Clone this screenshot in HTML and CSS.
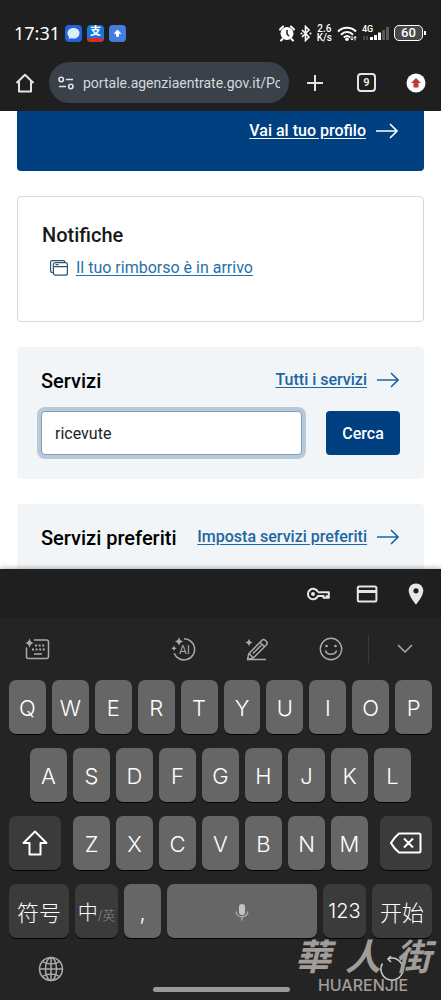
FILE: index.html
```
<!DOCTYPE html>
<html lang="it">
<head>
  <meta charset="UTF-8">
  <meta name="viewport" content="width=device-width, initial-scale=1">
  <title>Area riservata</title>
  <link rel="stylesheet" href="styles.css">
</head>
<body>

  <header class="top">
    <div class="status-bar">
      <span class="clock">17:31</span>
      <svg class="app-icon" viewBox="0 0 17 17"><rect width="17" height="17" rx="4" fill="#2463d8"/><path d="M8.500 3c3.600 0 6 2.200 6 5.200s-2.400 5.300-6 5.300c-.8 0-1.500-.1-2.100-.3L3.500 14l.6-2.200C3 10.900 2.500 9.700 2.500 8.200 2.500 5.200 4.900 3 8.500 3z" fill="#dcecff"/></svg>
      <span class="app-icon pay"><b>支</b><i></i></span>
      <svg class="app-icon" viewBox="0 0 17 17"><rect width="17" height="17" rx="4" fill="#437de0"/><path d="M8.500 4.500l4 4.200h-2.500v3h-3v-3H4.500z" fill="#fff"/></svg>

      <div class="status-right">
        <svg width="16" height="17" viewBox="0 0 16 17"><circle cx="8" cy="8.500" r="6.500" fill="#fff"/><path d="M1 4.500L4 1.500M15 4.500l-3-3M3.500 14L2 15.500M12.500 14l1.500 1.500" stroke="#fff" stroke-width="2" stroke-linecap="round"/><path d="M8 5v4l2 2" fill="none" stroke="#1f1f1f" stroke-width="1.500"/></svg>
        <svg width="12" height="17" viewBox="0 0 12 17"><path d="M2 5l7 7-3.500 3.500v-14L9 5l-7 7" fill="none" stroke="#fff" stroke-width="1.600"/><circle cx="1.500" cy="8.500" r="1" fill="#fff"/><circle cx="10.500" cy="8.500" r="1" fill="#fff"/></svg>
        <span class="speed">2.6<br>K/s</span>
        <svg width="20" height="17" viewBox="0 0 20 17"><g fill="none" stroke="#fff" stroke-width="2"><path d="M1 6.500c5-5 13-5 18 0"/><path d="M4 9.700c3.500-3.500 8.500-3.500 12 0"/><path d="M6.800 12.500c2-1.800 4.400-1.800 6.400 0"/></g><circle cx="10" cy="14.200" r="1.800" fill="#fff"/><path d="M15 11v4M13.600 13.500L15 15l1.400-1.500M18 15.500v-4M16.800 13L18 11.500l1.400 1.500" fill="none" stroke="#fff"/></svg>
        <span class="signal">
          <span>4G</span>
          <svg width="27" height="17" viewBox="0 0 27 17"><path d="M2 11v4M5 11v4" stroke="#777"/><path d="M9.500 12v3M13.500 10v5M17.500 7.500V15" stroke="#fff" stroke-width="3"/><path d="M21.500 5v10M25.500 2v13" stroke="#5a5a5a" stroke-width="3"/></svg>
        </span>
        <span class="battery">60</span>
      </div>
    </div>

    <div class="browser-bar">
      <button class="icon-btn home" aria-label="Home">
        <svg width="20" height="20" viewBox="0 0 20 20"><path d="M1.500 10L10 1.800 18.500 10M4 8v10.500h12V8" fill="none" stroke="#e3e3e3" stroke-width="2" stroke-linejoin="round"/></svg>
      </button>
      <label class="address">
        <svg width="16" height="14" viewBox="0 0 16 14"><g fill="none" stroke="#e3e3e3" stroke-width="1.600"><circle cx="3.200" cy="3.500" r="2.200"/><path d="M8 3.500h7M1 10.500h7"/><circle cx="12.800" cy="10.500" r="2.200"/></g></svg>
        <input type="text" value="portale.agenziaentrate.gov.it/PortaleWeb" aria-label="Indirizzo">
      </label>
      <button class="icon-btn" aria-label="Nuova scheda">
        <svg width="18" height="18" viewBox="0 0 18 18"><path d="M9 1v16M1 9h16" stroke="#e3e3e3" stroke-width="2"/></svg>
      </button>
      <button class="tabs" aria-label="Schede aperte">9</button>
      <button class="icon-btn" aria-label="Aggiorna">
        <svg width="20" height="20" viewBox="0 0 20 20"><circle cx="10" cy="10" r="9.500" fill="#fff"/><path d="M10 5l5 5h-2.500v4.500h-5V10H5z" fill="#b93b31"/></svg>
      </button>
    </div>
  </header>

  <main class="page">
    <section class="card profile">
      <a class="link-arrow" href="#profilo"><span>Vai al tuo profilo</span>
        <svg width="22" height="16" viewBox="0 0 22 16"><path d="M0 8h21M14 1l7 7-7 7" fill="none" stroke="currentColor" stroke-width="1.600"/></svg></a>
    </section>

    <section class="card notices">
      <h2>Notifiche</h2>
      <a class="notice" href="#rimborso">
        <svg width="18" height="16" viewBox="0 0 18 16"><g fill="none" stroke="#285577" stroke-width="1.200"><path d="M3.500 12.500H2.300c-1 0-1.700-.7-1.700-1.700V2.300C.6 1.300 1.300.6 2.300.6h11c1 0 1.700.7 1.700 1.700"/><rect x="3.400" y="2.600" width="14" height="12.600" rx="2"/><path d="M3.400 6.600h14M5.500 4.600h3"/></g></svg>
        <span>Il tuo rimborso è in arrivo</span>
      </a>
    </section>

    <section class="card services">
      <div class="card-head">
        <h2>Servizi</h2>
        <a class="link-arrow" href="#servizi"><span>Tutti i servizi</span>
          <svg width="22" height="16" viewBox="0 0 22 16"><path d="M0 8h21M14 1l7 7-7 7" fill="none" stroke="currentColor" stroke-width="1.600"/></svg></a>
      </div>
      <form class="search">
        <input type="text" value="ricevute" aria-label="Cerca un servizio">
        <button type="button">Cerca</button>
      </form>
    </section>

    <section class="card favourites">
      <div class="card-head">
        <h2>Servizi preferiti</h2>
        <a class="link-arrow" href="#preferiti"><span>Imposta servizi preferiti</span>
          <svg width="22" height="16" viewBox="0 0 22 16"><path d="M0 8h21M14 1l7 7-7 7" fill="none" stroke="currentColor" stroke-width="1.600"/></svg></a>
      </div>
    </section>
  </main>

  <footer class="keyboard">
    <div class="autofill">
      <button class="icon-btn" aria-label="Password">
        <svg width="24" height="24" viewBox="0 0 24 24"><path d="M12 10.200h10.800v5.600h-2v-2.600M17.500 15.800v-2.600M22.800 15.800h-5.300v-1.900H12a5.200 5.200 0 1 1 0-3.700" fill="none" stroke="#e6e6e6" stroke-width="2" stroke-linejoin="round"/><circle cx="7" cy="12" r="2" fill="#e6e6e6"/></svg>
      </button>
      <button class="icon-btn" aria-label="Carte">
        <svg width="24" height="24" viewBox="0 0 24 24"><rect x="2.800" y="4.500" width="18.600" height="15" rx="1.500" fill="none" stroke="#e6e6e6" stroke-width="2"/><path d="M2.800 9.500h18.600" stroke="#e6e6e6" stroke-width="3"/></svg>
      </button>
      <button class="icon-btn" aria-label="Indirizzi">
        <svg width="24" height="24" viewBox="0 0 24 24"><path d="M12 1.500c-4.300 0-7.300 3.200-7.300 7.200C4.700 14 12 22.500 12 22.500S19.300 14 19.300 8.700c0-4-3-7.200-7.300-7.200zm0 4.700a2.600 2.600 0 1 1 0 5.200 2.600 2.600 0 0 1 0-5.200z" fill="#e6e6e6" fill-rule="evenodd"/></svg>
      </button>
    </div>

    <div class="tools">
      <button class="icon-btn" aria-label="Tastiera">
        <svg width="26" height="24" viewBox="0 0 26 24"><path d="M10 3h12.500q2 0 2 2v14.500q0 2-2 2h-18q-2 0-2-2V10.500" fill="none" stroke="#aaa" stroke-width="1.500"/><path d="M5.500 1.200Q6.200 5.300 10 6 6.200 6.700 5.500 10.800 4.800 6.700 1 6 4.800 5.300 5.500 1.200z" fill="#aaa"/><path d="M11 8.500h10M8 12.500h13" stroke="#aaa" stroke-width="2" stroke-dasharray="2 1.600"/><path d="M10 17h8" stroke="#aaa" stroke-width="1.500"/></svg>
      </button>
      <span></span>
      <button class="icon-btn" aria-label="Assistente AI">
        <svg width="26" height="26" viewBox="0 0 26 26"><path d="M13 2.700a10.600 10.600 0 1 1-9.800 14.500" fill="none" stroke="#aaa" stroke-width="1.500"/><path d="M8 1q.6 3.900 4.500 4.500Q8.600 6.100 8 10 7.400 6.100 3.500 5.500 7.400 4.900 8 1zM3 9.500q.4 2.400 2.700 2.800Q3.400 12.700 3 15.100 2.600 12.700.3 12.300 2.600 11.900 3 9.500z" fill="#aaa"/><text class="ai" x="8" y="18">AI</text></svg>
      </button>
      <button class="icon-btn" aria-label="Scrittura">
        <svg width="26" height="26" viewBox="0 0 26 26"><g fill="none" stroke="#aaa" stroke-width="1.500" stroke-linejoin="round"><path d="M3.500 23.500l1.300-5.800L18 4.200q1.500-1.500 3.200 0l1.300 1.300q1.500 1.600 0 3.200L9.200 22zM16 6.300l4.500 4.500M5 17.500l4.300 4.300M9 17.500L17.500 9"/><path d="M3.500 23.500H22"/></g><path d="M5 2.500q.6 3.400 3.800 4Q5.600 7.100 5 10.500 4.400 7.100 1.200 6.500 4.400 5.900 5 2.500z" fill="#aaa"/></svg>
      </button>
      <button class="icon-btn" aria-label="Emoji">
        <svg width="24" height="24" viewBox="0 0 24 24"><circle cx="12" cy="12" r="10.700" fill="none" stroke="#aaa" stroke-width="1.400"/><circle cx="7.500" cy="9" r="1.300" fill="#aaa"/><circle cx="16.500" cy="9" r="1.300" fill="#aaa"/><path d="M6.500 13.500c1.300 5 9.700 5 11 0" fill="none" stroke="#aaa" stroke-width="1.500"/></svg>
      </button>
      <button class="icon-btn collapse" aria-label="Chiudi tastiera">
        <svg width="16" height="10" viewBox="0 0 16 10"><path d="M1 1l7 7 7-7" fill="none" stroke="#aaa" stroke-width="1.500"/></svg>
      </button>
    </div>

    <div class="keys">
      <div class="row">
        <button>Q</button><button>W</button><button>E</button><button>R</button><button>T</button><button>Y</button><button>U</button><button>I</button><button>O</button><button>P</button>
      </div>
      <div class="row row-home">
        <button>A</button><button>S</button><button>D</button><button>F</button><button>G</button><button>H</button><button>J</button><button>K</button><button>L</button>
      </div>
      <div class="row row-shift">
        <button class="dark shift" aria-label="Maiuscole">
          <svg width="26" height="26" viewBox="0 0 26 26"><path d="M13 1.500L24.500 13H18.500v11.500h-11V13H1.500z" fill="none" stroke="#fff" stroke-width="2" stroke-linejoin="round"/></svg>
        </button>
        <div class="row letters">
          <button>Z</button><button>X</button><button>C</button><button>V</button><button>B</button><button>N</button><button>M</button>
        </div>
        <button class="dark shift" aria-label="Cancella">
          <svg width="32" height="22" viewBox="0 0 32 22"><path d="M9 1.500h20q1.500 0 1.500 1.500v16q0 1.500-1.500 1.500H9Q4 16.500 1 11 4 5.500 9 1.500zM14 6.500l9 9M23 6.500l-9 9" fill="none" stroke="#fff" stroke-width="2" stroke-linejoin="round"/></svg>
        </button>
      </div>
      <div class="row" lang="zh-CN">
        <button class="dark wide">符号</button>
        <button class="dark mid">中<small>/英</small></button>
        <button class="comma">,</button>
        <button class="space" aria-label="Spazio">
          <svg width="14" height="18" viewBox="0 0 14 18"><rect x="4" y="1" width="6" height="11" rx="3" fill="#c4c4c4"/><path d="M1.200 8.500c0 7 11.600 7 11.600 0M7 14v3.500" fill="none" stroke="#a8a8a8" stroke-width="1.500"/></svg>
        </button>
        <button class="dark mid">123</button>
        <button class="dark wide">开始</button>
      </div>
    </div>

    <div class="nav">
      <button class="icon-btn" aria-label="Lingua">
        <svg width="26" height="26" viewBox="0 0 26 26"><g fill="none" stroke="#aaa" stroke-width="1.500"><circle cx="13" cy="13" r="11.500"/><ellipse cx="13" cy="13" rx="5.500" ry="11.500"/><path d="M1.500 13h23M13 1.500v23M4.500 5.500c4.500 3.300 12.500 3.300 17 0M4.500 20.500c4.500-3.300 12.500-3.300 17 0"/></g></svg>
      </button>
      <span class="home-line"></span>
      <svg width="26" height="26" viewBox="0 0 26 26"><path d="M10 2.500a11 11 0 1 1-6.500 5" fill="none" stroke="#ccc" stroke-width="1.500"/><path d="M12 0L9 3l3 3" fill="none" stroke="#ccc" stroke-width="1.500"/></svg>
    </div>

    <div class="watermark" lang="zh-TW">
      <span class="mark"><b>華</b><b>人</b><b>街</b></span>
      <span class="mark-latin">HUARENJIE</span>
    </div>
  </footer>

</body>
</html>
```
FILE: styles.css
```
* {
  box-sizing: border-box;
}

body {
  margin: 0;
  height: 100vh;
  display: flex;
  flex-direction: column;
  overflow: hidden;
  background: #fff;
  color: #17191c;
  font-family: Roboto, "Noto Sans CJK SC", sans-serif;
  font-size: 16px;
}

svg {
  display: block;
  flex: none;
}

button {
  font-family: inherit;
  border: none;
  padding: 0;
  cursor: pointer;
}

.icon-btn {
  display: flex;
  align-items: center;
  justify-content: center;
  background: none;
}

/* status bar and address bar */
.top {
  background: #1f1f1f;
  color: #fff;
}

.status-bar {
  display: flex;
  align-items: center;
  gap: 5px;
  height: 58px;
  padding: 8px 14px 0;
}

.clock {
  font-family: "Noto Sans", sans-serif;
  font-size: 18px;
  line-height: 20px;
}

.app-icon {
  width: 17px;
  height: 17px;
}

.pay {
  display: flex;
  flex-direction: column;
  border-radius: 4px;
  overflow: hidden;
  background: #1677e0;
  text-align: center;
}

.pay b {
  font-size: 11px;
  line-height: 14px;
  height: 13px;
}

.pay i {
  height: 4px;
  background: #d2302f;
}

.status-right {
  display: flex;
  align-items: center;
  gap: 5px;
  margin-left: auto;
}

.speed {
  font-size: 10px;
  font-weight: 500;
  line-height: 9px;
  text-align: center;
}

.signal {
  position: relative;
}

.signal span {
  position: absolute;
  left: 0;
  top: 0;
  font-size: 9px;
  font-weight: 500;
  line-height: 8px;
}

.battery {
  position: relative;
  width: 29px;
  height: 16px;
  margin-right: 4px;
  border: 1px solid #fff;
  border-radius: 5px;
  background: #484848;
  font-size: 13px;
  font-weight: 500;
  line-height: 14px;
  text-align: center;
}

.battery::after {
  content: "";
  position: absolute;
  right: -4px;
  top: 5px;
  width: 2px;
  height: 4px;
  background: #fff;
}

.browser-bar {
  display: flex;
  align-items: center;
  padding: 4px 15px 8px;
}

.address {
  flex: 1;
  display: flex;
  align-items: center;
  gap: 9px;
  height: 41px;
  margin: 0 17px 0 14px;
  padding: 0 9px;
  border-radius: 21px;
  background: #3b414b;
}

.address input {
  flex: 1;
  min-width: 0;
  padding: 0;
  border: none;
  background: none;
  color: #d6d8dc;
  font-family: Roboto, sans-serif;
  font-size: 14px;
}

.tabs {
  width: 19px;
  height: 19px;
  margin: 0 30px 0 33px;
  padding: 0;
  border: 2px solid #e3e3e3;
  border-radius: 4px;
  background: none;
  color: #e3e3e3;
  font-size: 11px;
  font-weight: 700;
  line-height: 15px;
}

/* page */
.page {
  flex: 1;
  min-height: 0;
  overflow: hidden;
  padding: 0 17px;
  display: flex;
  flex-direction: column;
  gap: 25px;
}

.card {
  flex: none;
  border-radius: 4px;
  padding: 22px 24px 24px;
}

h2 {
  margin: 0;
  font-size: 20px;
  font-weight: 500;
  line-height: 24px;
}

.link-arrow {
  display: flex;
  align-items: center;
  gap: 10px;
  color: #1d66a3;
  font-weight: 500;
  line-height: 22px;
}

.link-arrow span,
.notice span {
  text-decoration: underline;
  text-underline-offset: 2px;
}

.link-arrow,
.notice {
  text-decoration: none;
}

.profile {
  display: flex;
  justify-content: flex-end;
  align-items: flex-start;
  height: 60px;
  padding: 9px 26px;
  border-radius: 0 0 4px 4px;
  background: #003f80;
}

.profile .link-arrow {
  color: #fff;
}

.notices {
  min-height: 126px;
  border: 1px solid #d3d8d9;
  padding: 26px 24px;
}

.notice {
  display: flex;
  align-items: center;
  gap: 8px;
  margin: 11px 8px 0;
  color: #2870a8;
  line-height: 20px;
}

.services,
.favourites {
  background: #f2f5f7;
}

.services .search {
  padding-top: 18px;
}

.favourites {
  height: 132px;
}

.card-head {
  display: flex;
  justify-content: space-between;
  align-items: flex-start;
  color: #000;
}

.card-head .link-arrow {
  margin-right: 1px;
}

.search {
  display: flex;
  gap: 24px;
}

.search input {
  flex: 1;
  min-width: 0;
  height: 44px;
  padding: 0 13px;
  border: 1px solid #7d9fbe;
  border-radius: 4px;
  outline: none;
  box-shadow: 0 0 0 4px #b8c9d8;
  color: #222;
  font-family: inherit;
  font-size: 16px;
}

.search button {
  width: 74px;
  height: 44px;
  border-radius: 4px;
  background: #003f80;
  color: #fff;
  font-size: 16px;
  font-weight: 500;
}

/* keyboard */
.keyboard {
  position: relative;
  flex: none;
  background: #242424;
  box-shadow: 0 -1px 5px rgba(0,0,0,0.3);
}

.autofill {
  display: flex;
  justify-content: flex-end;
  align-items: center;
  gap: 25px;
  height: 49px;
  padding-right: 13px;
  background: #1f1f1f;
}

.tools {
  display: grid;
  grid-template-columns: repeat(6, 1fr);
  align-items: center;
  height: 62px;
}

.ai {
  font-family: Roboto, sans-serif;
  font-size: 12px;
  fill: #aaa;
}

.collapse {
  height: 28px;
  border-left: 1px solid #3b3b3b;
}

.keys {
  display: flex;
  flex-direction: column;
  gap: 14px;
  padding: 0 9px;
}

.row {
  display: flex;
  gap: 6px;
}

.row-home {
  padding: 0 21px;
}

.row-shift {
  gap: 12px;
}

.letters {
  flex: 1;
}

.row button {
  flex: 1 1 0;
  min-width: 0;
  height: 54px;
  padding-top: 2px;
  display: flex;
  align-items: center;
  justify-content: center;
  border-radius: 7px;
  background: #666;
  box-shadow: 0 1px 0 #050505;
  color: #fff;
  font-family: Inter, "Noto Sans CJK SC", sans-serif;
  font-size: 22px;
  font-weight: 300;
  white-space: nowrap;
}

.row .dark {
  padding-top: 0;
  background: #3b3b3b;
}

.row .shift {
  flex: 0 0 52px;
}

.row .wide {
  flex: 0 0 60px;
}

.row .mid {
  flex: 0 0 43px;
  font-size: 20px;
}

.row small {
  color: #888;
  font-size: 13px;
  padding-top: 6px;
}

.row .comma {
  flex: 0 0 37px;
}

.nav {
  display: flex;
  justify-content: space-between;
  align-items: center;
  height: 62px;
  padding: 0 36px 0 38px;
}

.home-line {
  align-self: flex-end;
  width: 137px;
  height: 5px;
  margin-bottom: 8px;
  border-radius: 3px;
  background: #999;
}

.watermark {
  position: absolute;
  right: 10px;
  bottom: 6px;
  display: flex;
  flex-direction: column;
  align-items: center;
  color: #a19e9a;
  pointer-events: none;
}

.mark {
  display: flex;
  gap: 14px;
  font-family: "Noto Sans CJK TC", sans-serif;
  font-size: 36px;
  font-style: italic;
  line-height: 44px;
}

.mark-latin {
  font-family: Inter, sans-serif;
  font-size: 16px;
  font-weight: 500;
  line-height: 18px;
}
```
